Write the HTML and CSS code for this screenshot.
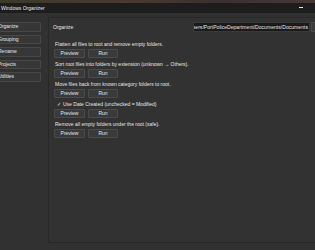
FILE: index.html
```html
<!DOCTYPE html>
<html>
<head>
<meta charset="utf-8">
<link rel="stylesheet" href="styles.css">
</head>
<body>
<div class="wallpaper"></div>
<div class="window">
  <div class="titlebar">
    <span class="title">Windows Organizer</span>
    <span class="min"></span>
  </div>
  <div class="main">
    <nav class="sidebar">
      <button class="nav-btn">Organize</button>
      <button class="nav-btn">Grouping</button>
      <button class="nav-btn">Rename</button>
      <button class="nav-btn">Projects</button>
      <button class="nav-btn">Utilities</button>
    </nav>
    <section class="panel">
      <div class="panel-head">
        <span class="heading">Organize</span>
        <div class="path"><span>C:/Users/PortPoliceDepartment/Documents/Documents</span></div>
        <button class="browse">Browse</button>
      </div>
      <div class="op">
        <p class="op-text">Flatten all files to root and remove empty folders.</p>
        <div class="btns"><button class="btn">Preview</button><button class="btn">Run</button></div>
      </div>
      <div class="op">
        <p class="op-text">Sort root files into folders by extension (unknown → Others).</p>
        <div class="btns"><button class="btn">Preview</button><button class="btn">Run</button></div>
      </div>
      <div class="op">
        <p class="op-text">Move files back from known category folders to root.</p>
        <div class="btns"><button class="btn">Preview</button><button class="btn">Run</button></div>
      </div>
      <div class="op">
        <p class="op-text check"><span class="tick">✓</span>Use Date Created (unchecked = Modified)</p>
        <div class="btns"><button class="btn">Preview</button><button class="btn">Run</button></div>
      </div>
      <div class="op">
        <p class="op-text">Remove all empty folders under the root (safe).</p>
        <div class="btns"><button class="btn">Preview</button><button class="btn">Run</button></div>
      </div>
    </section>
  </div>
</div>
</body>
</html>
```
FILE: styles.css
```css
* { box-sizing: border-box; }
html, body { margin: 0; padding: 0; }
body {
  width: 315px;
  height: 250px;
  overflow: hidden;
  background: #313131;
  font-family: "Liberation Sans", Arial, sans-serif;
  font-size: 5px;
  color: #e6e6e6;
}
.wallpaper {
  height: 3px;
  background: linear-gradient(90deg, #3b3a2a 0%, #4a3a30 40%, #3a3030 70%, #473838 100%);
}
.window {
  margin-left: -10px;
  width: 352px;
  background: #313131;
}
.titlebar {
  height: 10px;
  background: #1d1d1d;
  display: flex;
  align-items: center;
  justify-content: space-between;
  padding: 0 39px 0 11px;
}
.title { font-size: 5px; color: #e8e8e8; }
.min {
  width: 4px;
  height: 1px;
  background: #e8e8e8;
  margin-top: -1px;
}
.main {
  display: flex;
  align-items: flex-start;
  padding-top: 4px;
}
.sidebar {
  flex: 0 0 58px;
  padding: 5px 0 0 3px;
  display: flex;
  flex-direction: column;
  gap: 3px;
}
button {
  font-family: inherit;
  font-size: 5px;
  color: #e6e6e6;
  margin: 0;
  cursor: default;
}
.nav-btn {
  width: 48px;
  height: 9.5px;
  padding: 0 0 0 4px;
  text-align: left;
  background: #373737;
  border: 1px solid #484848;
  border-radius: 1px;
  line-height: 7px;
}
.panel {
  flex: 1;
  height: 226px;
  background: #323232;
  border: 1px solid #282828;
  padding: 4px 0 0 4px;
}
.panel-head {
  display: flex;
  align-items: center;
  height: 10px;
}
.heading { flex: 0 0 140px; }
.path {
  flex: 0 0 117px;
  height: 10px;
  background: #1a1a1a;
  border: 1px solid #3a3a3a;
  display: flex;
  justify-content: flex-end;
  align-items: center;
  overflow: hidden;
  white-space: nowrap;
  padding-right: 1px;
  color: #e2e2e2;
  font-size: 5.1px;
}
.browse {
  flex: 0 0 30px;
  margin-left: 1px;
  height: 10px;
  padding: 0 0 0 8px;
  text-align: left;
  background: #3c3c3c;
  border: 1px solid #4a4a4a;
}
.panel-head + .op { margin-top: 7px; }
.op { padding-left: 1px; }
.op-text {
  margin: 0;
  height: 10px;
  line-height: 10px;
  padding-left: 1px;
  white-space: nowrap;
}
.check { display: flex; align-items: center; gap: 2px; padding-left: 3px; }
.tick { font-size: 5px; }
.btns {
  display: flex;
  gap: 3px;
  height: 10px;
  align-items: flex-start;
}
.btn {
  width: 31px;
  height: 8.5px;
  padding: 0;
  background: #3a3a3a;
  border: 1px solid #4b4b4b;
  border-radius: 1px;
  line-height: 6px;
}
.btn + .btn { width: 30px; }
```
